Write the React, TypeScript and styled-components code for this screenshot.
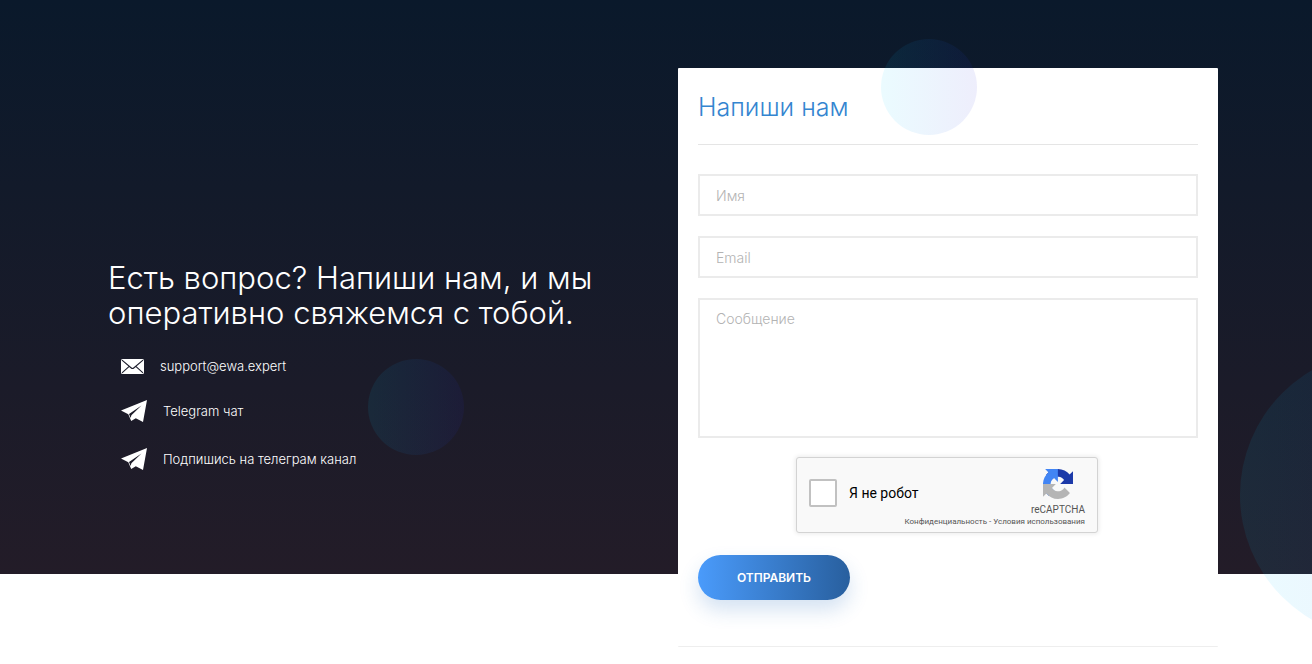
import React from 'react';
import styled, { createGlobalStyle } from 'styled-components';

const GlobalStyle = createGlobalStyle`
  *, *::before, *::after { box-sizing: border-box; }
  body {
    margin: 0;
    background: #fff;
    font-family: Inter, "Liberation Sans", sans-serif;
  }
`;

const Page = styled.main`
  position: relative;
  overflow: hidden;
  min-height: 100vh;
  padding: 68px 94px 17px;
  background: #fff linear-gradient(to bottom, #0a192b, #231c28) top / 100% 574px no-repeat;
`;

const Container = styled.div`
  display: grid;
  grid-template-columns: minmax(0, 1fr) minmax(0, 540px);
  column-gap: 30px;
  max-width: 1124px;
  margin: 0 auto;
`;

const Intro = styled.section`
  padding: 192px 0 0 14px;
  color: #fff;
`;

const Heading = styled.h1`
  max-width: 510px;
  margin: 0;
  font-size: 31px;
  font-weight: 300;
  line-height: 35px;
`;

const ContactList = styled.ul`
  display: flex;
  flex-direction: column;
  margin: 15px 0 0;
  padding: 0 0 0 13px;
  list-style: none;
`;

const ContactLink = styled.a<{ $compact?: boolean }>`
  display: flex;
  align-items: center;
  gap: 16px;
  height: ${(p) => (p.$compact ? 42 : 48)}px;
  color: #fff;
  font-size: 13px;
  font-weight: 300;
  line-height: 16px;
  text-decoration: none;
`;

const Card = styled.form`
  display: flex;
  flex-direction: column;
  padding: 21px 20px 46px;
  border-bottom: 1px solid #eee;
  border-radius: 1px;
  background: #fff;
`;

const CardTitle = styled.h2`
  margin: 0 0 29px;
  padding-bottom: 19px;
  border-bottom: 1px solid #e5e5e5;
  color: #3485d0;
  font-size: 25px;
  font-weight: 300;
  line-height: 36px;
`;

const Fields = styled.div`
  display: grid;
  gap: 20px;
`;

const Input = styled.input`
  width: 100%;
  height: 42px;
  padding: 0 16px;
  border: 2px solid #ebebeb;
  border-radius: 0;
  background: #fff;
  font: 300 14px/20px Inter, "Liberation Sans", sans-serif;
  &::placeholder { color: #b3b3b3; opacity: 1; }
`;

const Message = styled(Input).attrs({ as: 'textarea' })`
  display: block;
  height: 140px;
  padding: 9px 16px;
  resize: none;
`;

const CaptchaFrame = styled.div`
  align-self: center;
  width: 304px;
  height: 78px;
  margin-top: 19px;
`;

const Captcha = styled.div`
  display: flex;
  justify-content: space-between;
  width: 302px;
  height: 76px;
  padding: 0 12px;
  border: 1px solid #d3d3d3;
  border-radius: 3px;
  background: #f9f9f9;
  box-shadow: 0 0 4px 1px rgba(0, 0, 0, 0.08);
  font-family: Roboto, sans-serif;
`;

const CaptchaLabel = styled.label`
  display: flex;
  align-items: center;
  gap: 12px;
  height: 70px;
  color: #000;
  font-size: 14px;
  white-space: nowrap;
`;

const CaptchaCheck = styled.input`
  appearance: none;
  width: 28px;
  height: 28px;
  margin: 0;
  border: 2px solid #c1c1c1;
  border-radius: 2px;
  background: #fff;
`;

const CaptchaBrand = styled.div`
  display: flex;
  flex-direction: column;
  align-items: flex-end;
  width: 0;
  padding-top: 11px;
  color: #555;
  white-space: nowrap;
`;

const LogoBox = styled.div`
  height: 30px;
  padding-right: 12px;
`;

const BrandName = styled.span`
  margin-top: 4px;
  font-size: 10px;
  line-height: 14px;
`;

const BrandLinks = styled.small`
  font-size: 8px;
  line-height: 10px;
  a { color: inherit; text-decoration: none; }
`;

const Submit = styled.button`
  align-self: flex-start;
  width: 152px;
  height: 45px;
  margin-top: 20px;
  border: 0;
  border-radius: 23px;
  background: linear-gradient(to right, #4a9bfb, #285f9e);
  box-shadow: 0 10px 20px rgba(40, 110, 190, 0.2);
  color: #fff;
  font: 600 12px/16px Inter, "Liberation Sans", sans-serif;
  text-transform: uppercase;
`;

const Bubble = styled.span<{ $size: number; $left: string; $top: number }>`
  position: absolute;
  left: ${(p) => p.$left};
  top: ${(p) => p.$top}px;
  width: ${(p) => p.$size}px;
  height: ${(p) => p.$size}px;
  border-radius: 50%;
  background: linear-gradient(to right, #00d2ff, #2828d8);
  opacity: 0.08;
  pointer-events: none;
`;

const EnvelopeIcon = () => (
  <svg width="23" height="15" viewBox="0 0 23 15" aria-hidden="true">
    <rect width="23" height="15" rx="1.5" fill="#fff" />
    <path d="M1 1.2 10.3 9Q11.5 10 12.7 9L22 1.2M1 13.8 8.2 7.4M22 13.8 14.8 7.4" fill="none" stroke="#1b1c2a" strokeWidth="1.1" />
  </svg>
);

const PlaneIcon = () => (
  <svg width="26" height="22" viewBox="0 0 26 22" aria-hidden="true">
    <path d="M0 10.4 26 0 22 22 14.8 18.2 10.2 21 7.3 14.2Z" fill="#fff" />
    <path d="M8 14 20.5 5.4 10.4 15.2 9.6 18Z" fill="#1d1c29" />
  </svg>
);

const RecaptchaLogo = () => (
  <svg width="30" height="30" viewBox="0 0 64 64" aria-hidden="true">
    <path
      fill="#1c3aa9"
      d="M64 31.955c0-.46-.011-.917-.032-1.372V4.643l-7.171 7.17C50.928 4.629 41.999.047 31.999.047c-10.406 0-19.652 4.961-25.489 12.644l11.754 11.878a15.574 15.574 0 0 1 4.762-5.344c2.054-1.603 4.964-2.913 8.974-2.913.484 0 .858.057 1.133.163 4.968.392 9.275 3.134 11.811 7.114l-8.32 8.32c10.538-.041 22.443-.066 27.376.046"
    />
    <path
      fill="#4285f4"
      d="M31.862.094a32.9 32.9 0 0 0-1.372.032H4.55l7.17 7.171C4.535 13.165-.046 22.094-.046 32.094c0 10.406 4.961 19.653 12.644 25.489l11.878-11.754a15.574 15.574 0 0 1-5.344-4.762c-1.603-2.054-2.913-4.964-2.913-8.974 0-.484.057-.858.163-1.133.392-4.968 3.134-9.275 7.114-11.811l8.32 8.32c-.041-10.538-.066-22.443.046-27.376"
    />
    <path
      fill="#b5b5b5"
      d="M.001 32.045c.001.46.011.917.033 1.372v25.94l7.17-7.17c5.869 7.184 14.797 11.766 24.798 11.766 10.406 0 19.652-4.962 25.489-12.644L45.737 39.431a15.574 15.574 0 0 1-4.762 5.344c-2.054 1.603-4.964 2.913-8.974 2.913-.484 0-.858-.057-1.133-.163-4.968-.392-9.275-3.134-11.811-7.114l8.32-8.32C16.839 32.132 4.934 32.157.001 32.045"
    />
  </svg>
);

export default function App() {
  return (
    <>
      <GlobalStyle />
      <Page>
        <Container>
          <Intro>
            <Heading>Есть вопрос? Напиши нам, и мы оперативно свяжемся с тобой.</Heading>
            <ContactList>
              <li><ContactLink $compact href="mailto:support@ewa.expert"><EnvelopeIcon />support@ewa.expert</ContactLink></li>
              <li><ContactLink href="#chat"><PlaneIcon />Telegram чат</ContactLink></li>
              <li><ContactLink href="#channel"><PlaneIcon />Подпишись на телеграм канал</ContactLink></li>
            </ContactList>
          </Intro>
          <Card onSubmit={(e) => e.preventDefault()}>
            <CardTitle>Напиши нам</CardTitle>
            <Fields>
              <Input type="text" name="name" placeholder="Имя" aria-label="Имя" />
              <Input type="email" name="email" placeholder="Email" aria-label="Email" />
              <Message name="message" placeholder="Сообщение" aria-label="Сообщение" />
            </Fields>
            <CaptchaFrame>
              <Captcha>
                <CaptchaLabel>
                  <CaptchaCheck type="checkbox" />
                  Я не робот
                </CaptchaLabel>
                <CaptchaBrand>
                  <LogoBox><RecaptchaLogo /></LogoBox>
                  <BrandName>reCAPTCHA</BrandName>
                  <BrandLinks><a href="#privacy">Конфиденциальность</a> - <a href="#terms">Условия использования</a></BrandLinks>
                </CaptchaBrand>
              </Captcha>
            </CaptchaFrame>
            <Submit type="submit">Отправить</Submit>
          </Card>
        </Container>
        <Bubble $size={96} $left="calc(50% + 225px)" $top={39} />
        <Bubble $size={96} $left="calc(50% - 288px)" $top={359} />
        <Bubble $size={288} $left="calc(100% - 72px)" $top={351} />
      </Page>
    </>
  );
}
